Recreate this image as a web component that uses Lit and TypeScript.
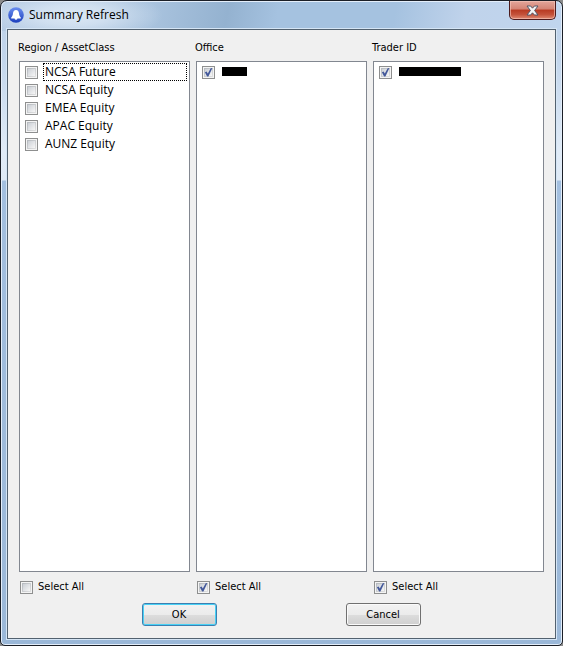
import { LitElement, html, css, svg, nothing } from "lit";
import { customElement, property, state } from "lit/decorators.js";
import { classMap } from "lit/directives/class-map.js";
import { styleMap } from "lit/directives/style-map.js";

interface Item {
  label: string;
  checked: boolean;
  redacted?: number;
}

interface Group {
  title: string;
  items: Item[];
  all: boolean;
}

const checkStyles = css`
  .box {
    appearance: none;
    box-sizing: border-box;
    width: 13px;
    height: 13px;
    margin: 0;
    padding: 2px;
    border: 1px solid #8e8f8f;
    background:
      linear-gradient(135deg, #ccd0d6, #f6f6f6) content-box,
      linear-gradient(135deg, #aeb3b9, #e6e6e6) padding-box;
    box-shadow: inset 0 0 0 1px #f4f4f4;
  }
  .tick {
    display: inline-grid;
    flex: none;
    width: 13px;
    height: 13px;
  }
  .tick > * {
    grid-area: 1 / 1;
  }
  .tick svg {
    width: 13px;
    height: 13px;
    pointer-events: none;
  }
`;

const tickBox = (id: string, checked: boolean, toggle: () => void) => html`
  <span class="tick">
    <input class="box" type="checkbox" id=${id} .checked=${checked} @change=${toggle} />
    ${checked
      ? html`<svg viewBox="0 0 13 13" aria-hidden="true">
          ${svg`<path d="M2.9 6.2 L4.6 5.6 L5.8 7.4 L8.7 2.3 L10.4 2.1 L6.4 10.6 L5.1 10.6 Z" fill="#43589a"/>`}
        </svg>`
      : nothing}
  </span>
`;

@customElement("check-group")
class CheckGroup extends LitElement {
  @property({ attribute: false }) group!: Group;
  @property({ type: Number }) focusedRow = -1;

  static styles = [
    checkStyles,
    css`
      :host {
        display: flex;
        flex-direction: column;
        min-width: 0;
        font: 11px/14px "DejaVu Sans Condensed", "Noto Sans", sans-serif;
      }
      .title {
        margin: 0 0 6px;
        font: inherit;
        white-space: nowrap;
      }
      .list {
        flex: 1;
        list-style: none;
        margin: 0 0 0 1px;
        padding: 1px 2px;
        border: 1px solid #828790;
        background: #fff;
      }
      .row {
        display: flex;
        align-items: center;
        gap: 5px;
        height: 18px;
        padding-left: 3px;
      }
      .name {
        flex: 1;
        height: 16px;
        padding-left: 1px;
        border: 1px solid transparent;
        font: 12px/16px "Open Sans", sans-serif;
        white-space: nowrap;
      }
      .name.focused {
        border: 1px dotted #000;
      }
      .bar {
        display: block;
        height: 9px;
        margin-top: 3px;
        background: #000;
      }
      .all {
        display: flex;
        align-items: center;
        gap: 5px;
        margin: 8px 0 0 2px;
      }
    `,
  ];

  private toggle(i: number) {
    const items = this.group.items.map((it, n) => (n === i ? { ...it, checked: !it.checked } : it));
    this.group = { ...this.group, items, all: items.every((it) => it.checked) };
  }

  private toggleAll() {
    const all = !this.group.all;
    this.group = { ...this.group, all, items: this.group.items.map((it) => ({ ...it, checked: all })) };
  }

  render() {
    return html`
      <h2 class="title">${this.group.title}</h2>
      <ul class="list">
        ${this.group.items.map(
          (it, i) => html`<li class="row">
            ${tickBox(`item${i}`, it.checked, () => this.toggle(i))}
            <label for="item${i}" class=${classMap({ name: true, focused: i === this.focusedRow })}
              >${it.redacted
                ? html`<span class="bar" style=${styleMap({ width: `${it.redacted}px` })}></span>`
                : it.label}</label
            >
          </li>`,
        )}
      </ul>
      <div class="all">
        ${tickBox("all", this.group.all, () => this.toggleAll())}
        <label for="all">Select All</label>
      </div>
    `;
  }
}

@customElement("app-root")
class AppRoot extends LitElement {
  @state() private groups: Group[] = [
    {
      title: "Region / AssetClass",
      all: false,
      items: ["NCSA Future", "NCSA Equity", "EMEA Equity", "APAC Equity", "AUNZ Equity"].map((label) => ({
        label,
        checked: false,
      })),
    },
    { title: "Office", all: true, items: [{ label: "", checked: true, redacted: 25 }] },
    { title: "Trader ID", all: true, items: [{ label: "", checked: true, redacted: 62 }] },
  ];

  static styles = css`
    :host {
      display: block;
      height: 100vh;
      background: #8b8b8b;
      color: #000;
    }
    .window {
      box-sizing: border-box;
      display: flex;
      flex-direction: column;
      height: 100%;
      padding: 0 6px 6px;
      border: 1px solid #1b1f27;
      border-radius: 7px 7px 5px 5px;
      box-shadow: inset 0 0 0 1px #e4eefa;
      background:
        radial-gradient(ellipse 90px 26px at 72px 14px, #dce8f5 0, #dce8f5bb 40%, #dce8f500 100%) 0 0 / 100% 30px no-repeat,
        linear-gradient(100deg, #b4cae3 0, #a9c3de 150px, #94b2d0 225px, #a5c2e0 275px, #a5c2e0 390px, #c0d3eb 460px, #c0d5ee 100%) 0 0 / 100% 30px no-repeat,
        linear-gradient(#bcd0e8 0, #c3d6ec 60px, #e0ebf7 150px, #dfeaf6 179px, #a3bfdf 180px, #9bb8d8 100%);
    }
    .titlebar {
      display: flex;
      align-items: center;
      height: 28px;
      gap: 5px;
      padding-left: 1px;
    }
    .logo {
      width: 16px;
      height: 16px;
    }
    .caption {
      flex: 1;
      margin: 0;
      font: 12px/16px "Open Sans", sans-serif;
    }
    .close {
      align-self: flex-start;
      display: grid;
      place-items: center;
      width: 47px;
      height: 19px;
      padding: 0;
      border: 1px solid #4b1a1c;
      border-top: 0;
      border-radius: 0 0 5px 5px;
      background: linear-gradient(#e3a69b 0, #d48374 45%, #b83a22 50%, #c4523a 75%, #e08a72 100%);
      box-shadow: inset 0 0 0 1px #f3c3b8aa;
    }
    .client {
      flex: 1;
      display: flex;
      flex-direction: column;
      border: 1px solid #52616f;
      outline: 1px solid #d5e5f5;
      background: #f0f0f0;
      padding: 11px 11px 12px 10px;
    }
    .groups {
      flex: 1;
      display: grid;
      grid-template-columns: repeat(3, minmax(0, 1fr));
      gap: 5px;
    }
    .actions {
      display: flex;
      justify-content: center;
      gap: 129px;
      margin-top: 9px;
    }
    .button {
      width: 75px;
      height: 23px;
      padding: 0;
      border: 1px solid #707070;
      border-radius: 3px;
      background: linear-gradient(#f2f2f2 0, #ebebeb 50%, #dddddd 50%, #cfcfcf 100%);
      box-shadow: inset 0 0 0 1px #fafafa;
      color: #000;
      font: 11px/14px "DejaVu Sans Condensed", "Noto Sans", sans-serif;
    }
    .button.primary {
      border-color: #3c7fb1;
      box-shadow: inset 0 0 0 1px #48d1f5;
    }
  `;

  render() {
    return html`
      <div class="window">
        <header class="titlebar">
          <svg class="logo" viewBox="0 0 16 16" aria-hidden="true">
            <defs>
              <linearGradient id="g" x1="0" y1="0" x2="0" y2="1">
                <stop offset="0" stop-color="#6b8ff0" />
                <stop offset="1" stop-color="#1c3fbd" />
              </linearGradient>
            </defs>
            <circle cx="8" cy="8" r="7.8" fill="url(#g)" />
            <path
              d="M8 3 C9.9 3 10.8 4.4 11 6.2 C11.2 8.4 11.8 9.4 12.8 10.4 V11.4 H3.2 V10.4 C4.2 9.4 4.8 8.4 5 6.2 C5.2 4.4 6.1 3 8 3 Z M6.6 11.4 H9.4 A1.4 1.4 0 0 1 6.6 11.4 Z"
              fill="#fff"
            />
          </svg>
          <h1 class="caption">Summary Refresh</h1>
          <button class="close" type="button" aria-label="Close">
            <svg width="13" height="11" viewBox="0 0 13 11" aria-hidden="true">
              <path
                d="M1 1 H4.6 L6.5 3.2 L8.4 1 H12 L8.6 5.5 L12 10 H8.4 L6.5 7.8 L4.6 10 H1 L4.4 5.5 Z"
                fill="#f4f4f4"
                stroke="#535666"
                stroke-width="1"
              />
            </svg>
          </button>
        </header>
        <main class="client">
          <div class="groups">
            ${this.groups.map(
              (g, i) => html`<check-group .group=${g} .focusedRow=${i === 0 ? 0 : -1}></check-group>`,
            )}
          </div>
          <div class="actions">
            <button class="button primary" type="button">OK</button>
            <button class="button" type="button">Cancel</button>
          </div>
        </main>
      </div>
    `;
  }
}
